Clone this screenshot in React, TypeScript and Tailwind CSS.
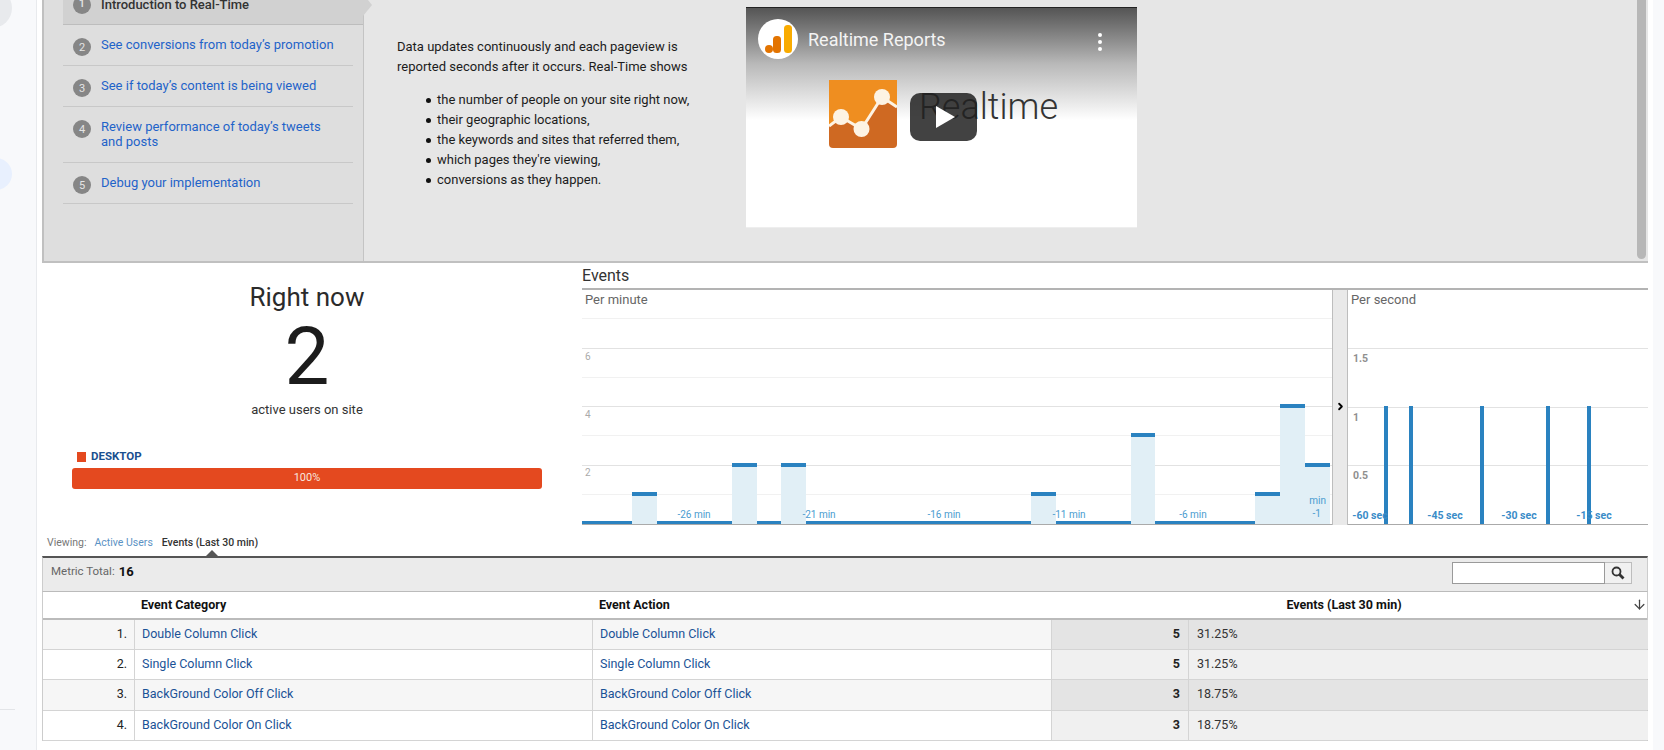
import { ArrowDown, ChevronRight } from "lucide-react";

const steps = [
  { n: 2, text: "See conversions from today’s promotion", h: "h-[41px]" },
  { n: 3, text: "See if today’s content is being viewed", h: "h-[41px]" },
  { n: 4, text: "Review performance of today’s tweets and posts", h: "h-[56px]" },
  { n: 5, text: "Debug your implementation", h: "h-[41px]" },
];

const bullets = [
  "the number of people on your site right now,",
  "their geographic locations,",
  "the keywords and sites that referred them,",
  "which pages they're viewing,",
  "conversions as they happen.",
];

const rows = [
  { n: 1, name: "Double Column Click", value: 5, pct: "31.25%", h: "h-[30px]" },
  { n: 2, name: "Single Column Click", value: 5, pct: "31.25%", h: "h-[30px]" },
  { n: 3, name: "BackGround Color Off Click", value: 3, pct: "18.75%", h: "h-[31px]" },
  { n: 4, name: "BackGround Color On Click", value: 3, pct: "18.75%", h: "h-[30px]" },
];

// chart coordinates are relative to the chart box (x - 582, y - 290)
const minuteBars = [
  { x: 50, w: 25, top: 202 },
  { x: 150, w: 25, top: 173 },
  { x: 199, w: 25, top: 173 },
  { x: 449, w: 25, top: 202 },
  { x: 549, w: 24, top: 143 },
  { x: 673, w: 25, top: 202 },
  { x: 698, w: 25, top: 114 },
  { x: 723, w: 25, top: 173 },
];
const minuteLabels = [
  { x: 112, text: "-26 min" },
  { x: 237, text: "-21 min" },
  { x: 362, text: "-16 min" },
  { x: 487, text: "-11 min" },
  { x: 611, text: "-6 min" },
];
const secondBars = [36, 61, 132, 198, 239];
const secondLabels = [
  { x: 22, text: "-60 sec" },
  { x: 97, text: "-45 sec" },
  { x: 171, text: "-30 sec" },
  { x: 246, text: "-15 sec" },
];

function Badge({ n }: { n: number }) {
  return (
    <span className="flex h-[18px] w-[18px] shrink-0 items-center justify-center rounded-full bg-[#868686] text-[11px] text-[#e4e4e4]">
      {n}
    </span>
  );
}

function MinuteChart() {
  return (
    <svg width="750" height="235" className="block shrink-0">
      {[28, 87, 145, 204].map((y) => (
        <line key={y} x1="0" x2="750" y1={y + 0.5} y2={y + 0.5} stroke="#f1f1f1" />
      ))}
      {[58, 116, 175].map((y) => (
        <line key={y} x1="0" x2="750" y1={y + 0.5} y2={y + 0.5} stroke="#e2e2e2" />
      ))}
      <text x="3" y="70" fontSize="10" fill="#aaaaaa">6</text>
      <text x="3" y="128" fontSize="10" fill="#aaaaaa">4</text>
      <text x="3" y="186" fontSize="10" fill="#aaaaaa">2</text>
      <rect x="0" y="231" width="673" height="3" fill="#2a82c0" />
      {minuteBars.map((b) => (
        <g key={b.x}>
          <rect x={b.x} y={b.top} width={b.w} height={234 - b.top} fill="#e1eff6" />
          <rect x={b.x} y={b.top} width={b.w} height="4" fill="#2a82c0" />
        </g>
      ))}
      <line x1="0" x2="750" y1="234.5" y2="234.5" stroke="#aaaaaa" />
      {minuteLabels.map((l) => (
        <text key={l.x} x={l.x} y="228" fontSize="10" textAnchor="middle" fill="#4a9cd0">
          {l.text}
        </text>
      ))}
      <text x="744" y="214" fontSize="10" textAnchor="end" fill="#4a9cd0">min</text>
      <text x="739" y="227" fontSize="10" textAnchor="end" fill="#4a9cd0">-1</text>
    </svg>
  );
}

function SecondChart() {
  return (
    <svg width="300" height="235" className="block shrink-0">
      {[58, 117, 175].map((y) => (
        <line key={y} x1="0" x2="300" y1={y + 0.5} y2={y + 0.5} stroke="#e2e2e2" />
      ))}
      <text x="5" y="72" fontSize="10.5" fontWeight="700" fill="#8f8f8f">1.5</text>
      <text x="5" y="131" fontSize="10.5" fontWeight="700" fill="#8f8f8f">1</text>
      <text x="5" y="189" fontSize="10.5" fontWeight="700" fill="#8f8f8f">0.5</text>
      {secondBars.map((x) => (
        <rect key={x} x={x} y="116" width="4" height="118" fill="#2a82c0" />
      ))}
      <line x1="0" x2="300" y1="234.5" y2="234.5" stroke="#aaaaaa" />
      {secondLabels.map((l) => (
        <text key={l.x} x={l.x} y="229" fontSize="10.5" fontWeight="700" textAnchor="middle" fill="#3a8cc8">
          {l.text}
        </text>
      ))}
    </svg>
  );
}

function VideoThumb() {
  return (
    <div className="relative mt-[7px] h-[221px] w-[391px] shrink-0 overflow-hidden border-y border-t-[#222222] border-b-[#eeeeee] bg-white">
      <div className="absolute inset-x-0 top-0 h-[112px] bg-gradient-to-b from-[#555555] via-[#b9b9b9] via-50% to-white" />
      <svg width="40" height="40" viewBox="0 0 40 40" className="absolute left-[12px] top-[11px]">
        <circle cx="20" cy="20" r="20" fill="#ffffff" />
        <rect x="26" y="6" width="8" height="28" rx="3.5" fill="#f9ab00" />
        <rect x="15" y="17" width="8" height="17" rx="3.5" fill="#e37400" />
        <circle cx="11" cy="30" r="4" fill="#e37400" />
      </svg>
      <span className="absolute left-[62px] top-[19px] text-[18px] leading-[26px] text-[#f4f4f4]">Realtime Reports</span>
      <div className="absolute left-[352px] top-[25px] flex flex-col gap-[3px]">
        <span className="h-[4px] w-[4px] rounded-full bg-white" />
        <span className="h-[4px] w-[4px] rounded-full bg-white" />
        <span className="h-[4px] w-[4px] rounded-full bg-white" />
      </div>
      <svg width="68" height="68" viewBox="0 0 68 68" className="absolute left-[83px] top-[72px]">
        <rect width="68" height="68" rx="4" fill="#cf6922" />
        <path d="M0 0H68V27L53 17L32.5 49L12 37L0 46Z" fill="#ef8e20" />
        <path d="M0 46L12 37L32.5 49L53 17L68 27" fill="none" stroke="#fdf3e3" strokeWidth="3" />
        <circle cx="12" cy="37" r="8" fill="#fdf3e3" />
        <circle cx="32.5" cy="49" r="8" fill="#fdf3e3" />
        <circle cx="53" cy="17" r="8" fill="#fdf3e3" />
      </svg>
      <span className="absolute left-[173px] top-[77px] text-[36px] font-light leading-[44px] text-[#333333]">Realtime</span>
      <svg width="67" height="48" viewBox="0 0 67 48" className="absolute left-[164px] top-[85px]">
        <rect width="67" height="48" rx="10" fill="#212121" fillOpacity="0.85" />
        <path d="M26 13L45 24L26 35Z" fill="#ffffff" />
      </svg>
    </div>
  );
}

export default function App() {
  return (
    <div className="flex h-[750px] w-[1664px] overflow-hidden bg-[#f8f9fb] font-[family-name:Roboto,sans-serif] text-[13px] text-[#222222]">
      <aside className="flex w-[37px] shrink-0 flex-col border-r border-[#e8eaed]">
        <div className="-ml-[28px] -mt-[12px] h-[40px] w-[40px] rounded-full bg-[#e8eaed]" />
        <div className="-ml-[20px] mt-[130px] h-[32px] w-[32px] rounded-full bg-[#e8f0fe]" />
        <div className="mt-[519px] h-px w-[15px] bg-[#e3e5e8]" />
      </aside>

      <main className="w-[1616px] shrink-0 bg-white px-[5px]">
        {/* tutorial panel */}
        <section className="flex h-[263px] border-b-2 border-l-2 border-[#c0c0c0] bg-[#e6e6e6]">
          <nav className="h-[261px] w-[320px] shrink-0 overflow-hidden border-r border-[#c4c4c4] bg-[#dedede]">
            <div className="relative -mt-[15px] ml-[19px] flex h-[40px] items-center gap-[10px] border-b border-[#bdbdbd] bg-[#d1d1d1] pl-[10px] font-medium text-[#333333]">
              <Badge n={1} />
              <span>Introduction to Real-Time</span>
            </div>
            <ul className="ml-[19px] w-[290px]">
              {steps.map((s) => (
                <li key={s.n} className={`flex items-start gap-[10px] border-b border-[#c8c8c8] pl-[10px] pt-[13px] leading-[15px] text-[#1f63c9] ${s.h}`}>
                  <Badge n={s.n} />
                  <span className="-mt-[1px] w-[234px]">{s.text}</span>
                </li>
              ))}
            </ul>
          </nav>
          <div className="relative -ml-px w-0 shrink-0">
            <svg width="10" height="22" viewBox="0 0 10 22" className="absolute left-0 top-0">
              <path d="M0 -6L9 5L0 16Z" fill="#d1d1d1" />
            </svg>
          </div>
          <div className="w-[383px] shrink-0 pl-[34px] pt-[37px] leading-[20px] text-[#1c1c1c]">
            <p className="w-[300px]">Data updates continuously and each pageview is reported seconds after it occurs. Real-Time shows</p>
            <ul className="mt-[13px] pl-[29px]">
              {bullets.map((b) => (
                <li key={b} className="flex items-center gap-[6px] whitespace-nowrap">
                  <span className="h-[5px] w-[5px] shrink-0 rounded-full bg-[#111111]" />
                  {b}
                </li>
              ))}
            </ul>
          </div>
          <VideoThumb />
          <div className="ml-auto mr-[2px] flex w-[10px] justify-center">
            <div className="mb-[2px] w-[9px] rounded-b-full bg-[#b7b7b7]" />
          </div>
        </section>

        {/* active users and charts */}
        <section className="flex h-[269px]">
          <div className="w-[540px] shrink-0 pl-[30px] pr-[40px] pt-[18px]">
            <p className="text-center text-[26px] leading-[32px] text-[#2b2b2b]">Right now</p>
            <p className="mt-[4px] text-center text-[80px] font-normal leading-[80px] text-[#1c1c1c]">2</p>
            <p className="mt-[5px] text-center leading-[16px] text-[#333333]">active users on site</p>
            <div className="mt-[33px] flex h-[12px] items-center gap-[5px] pl-[5px]">
              <span className="h-[10px] w-[9px] bg-[#e4491f]" />
              <span className="text-[11.5px] font-bold text-[#1a4f8f]">DESKTOP</span>
            </div>
            <div className="mt-[5px] flex h-[21px] items-center justify-center rounded-[3px] bg-[#e4491f] text-[11px] text-[#f8e6df]">100%</div>
          </div>
          <div className="w-[1066px] shrink-0">
            <h2 className="h-[27px] border-b-2 border-[#b3b3b3] pt-[2px] text-[16px] leading-[22px] text-[#333333]">Events</h2>
            <div className="flex h-[235px]">
              <div className="relative shrink-0">
                <MinuteChart />
                <span className="absolute left-[3px] top-0 text-[#666666]">Per minute</span>
              </div>
              <div className="flex h-[235px] w-[16px] shrink-0 items-center justify-center border-x border-[#bdbdbd] bg-[#e9e9e9] pb-[2px]">
                <ChevronRight size={11} strokeWidth={4} className="text-black" />
              </div>
              <div className="relative shrink-0">
                <SecondChart />
                <span className="absolute left-[3px] top-0 text-[#666666]">Per second</span>
              </div>
            </div>
          </div>
        </section>

        <div className="relative mt-[2px] flex h-[22px] items-start gap-[8px] pl-[5px] pt-[1px] text-[10.5px] leading-[16px]">
          <span className="text-[#777777]">Viewing:</span>
          <span className="text-[#5b92c4]">Active Users</span>
          <span className="ml-[1px] font-medium text-[#333333]">Events (Last 30 min)</span>
          <svg width="12" height="6" viewBox="0 0 12 6" className="absolute bottom-0 left-[164px]">
            <path d="M0 6L6 0L12 6Z" fill="#555555" />
          </svg>
        </div>

        {/* table */}
        <div className="flex h-[36px] items-start justify-between border-x border-b border-t-2 border-x-[#cccccc] border-b-[#bbbbbb] border-t-[#555555] bg-[#ebebeb] pl-[8px] pr-[15px] pt-[4px]">
          <div className="flex h-[20px] items-center gap-[4px]">
            <span className="text-[11.5px] text-[#666666]">Metric Total:</span>
            <span className="text-[13px] font-bold text-[#111111]">16</span>
          </div>
          <div className="flex h-[22px]">
            <div className="h-[22px] w-[153px] border border-[#9a9a9a] bg-white" />
            <div className="flex h-[22px] w-[27px] items-center justify-center border-y border-r border-[#bdbdbd] bg-[#f1f1f1]">
              <svg width="14" height="14" viewBox="0 0 14 14" fill="none" stroke="#333333">
                <circle cx="5.5" cy="5.5" r="4" strokeWidth="1.8" />
                <line x1="8.5" y1="8.5" x2="12.5" y2="12.5" strokeWidth="2.8" />
              </svg>
            </div>
          </div>
        </div>

        <div className="w-[1606px] border-x border-[#cccccc] text-[12.5px]">
          <div className="grid h-[28px] grid-cols-[91px_458px_459px_597px] items-center border-b-2 border-[#bbbbbb] font-bold text-[#111111]">
            <span />
            <span className="pl-[7px]">Event Category</span>
            <span className="pl-[7px]">Event Action</span>
            <div className="relative pr-[11px] text-center">
              Events (Last 30 min)
              <ArrowDown size={15} className="absolute right-[1px] top-[1px] text-[#444444]" />
            </div>
          </div>
          {rows.map((r) => (
            <div
              key={r.n}
              className={`grid grid-cols-[91px_458px_459px_137px_460px] border-b border-[#d4d4d4] ${r.h} ${r.n % 2 === 1 ? "bg-[#f6f6f6]" : "bg-white"}`}
            >
              <span className="flex items-center justify-end pb-[1px] pr-[7px] text-[#222222]">{r.n}.</span>
              <a className="flex items-center border-l border-[#d4d4d4] pb-[1px] pl-[7px] text-[#1a5296]">{r.name}</a>
              <a className="flex items-center border-l border-[#d4d4d4] pb-[1px] pl-[7px] text-[#1a5296]">{r.name}</a>
              <span className={`flex items-center justify-end border-l border-[#d4d4d4] pb-[1px] pr-[8px] font-bold ${r.n % 2 === 1 ? "bg-[#e4e4e4]" : "bg-[#f0f0f0]"}`}>{r.value}</span>
              <span className={`flex items-center border-l border-[#d4d4d4] pb-[1px] pl-[8px] text-[#333333] ${r.n % 2 === 1 ? "bg-[#e4e4e4]" : "bg-[#f0f0f0]"}`}>{r.pct}</span>
            </div>
          ))}
        </div>
      </main>
    </div>
  );
}
